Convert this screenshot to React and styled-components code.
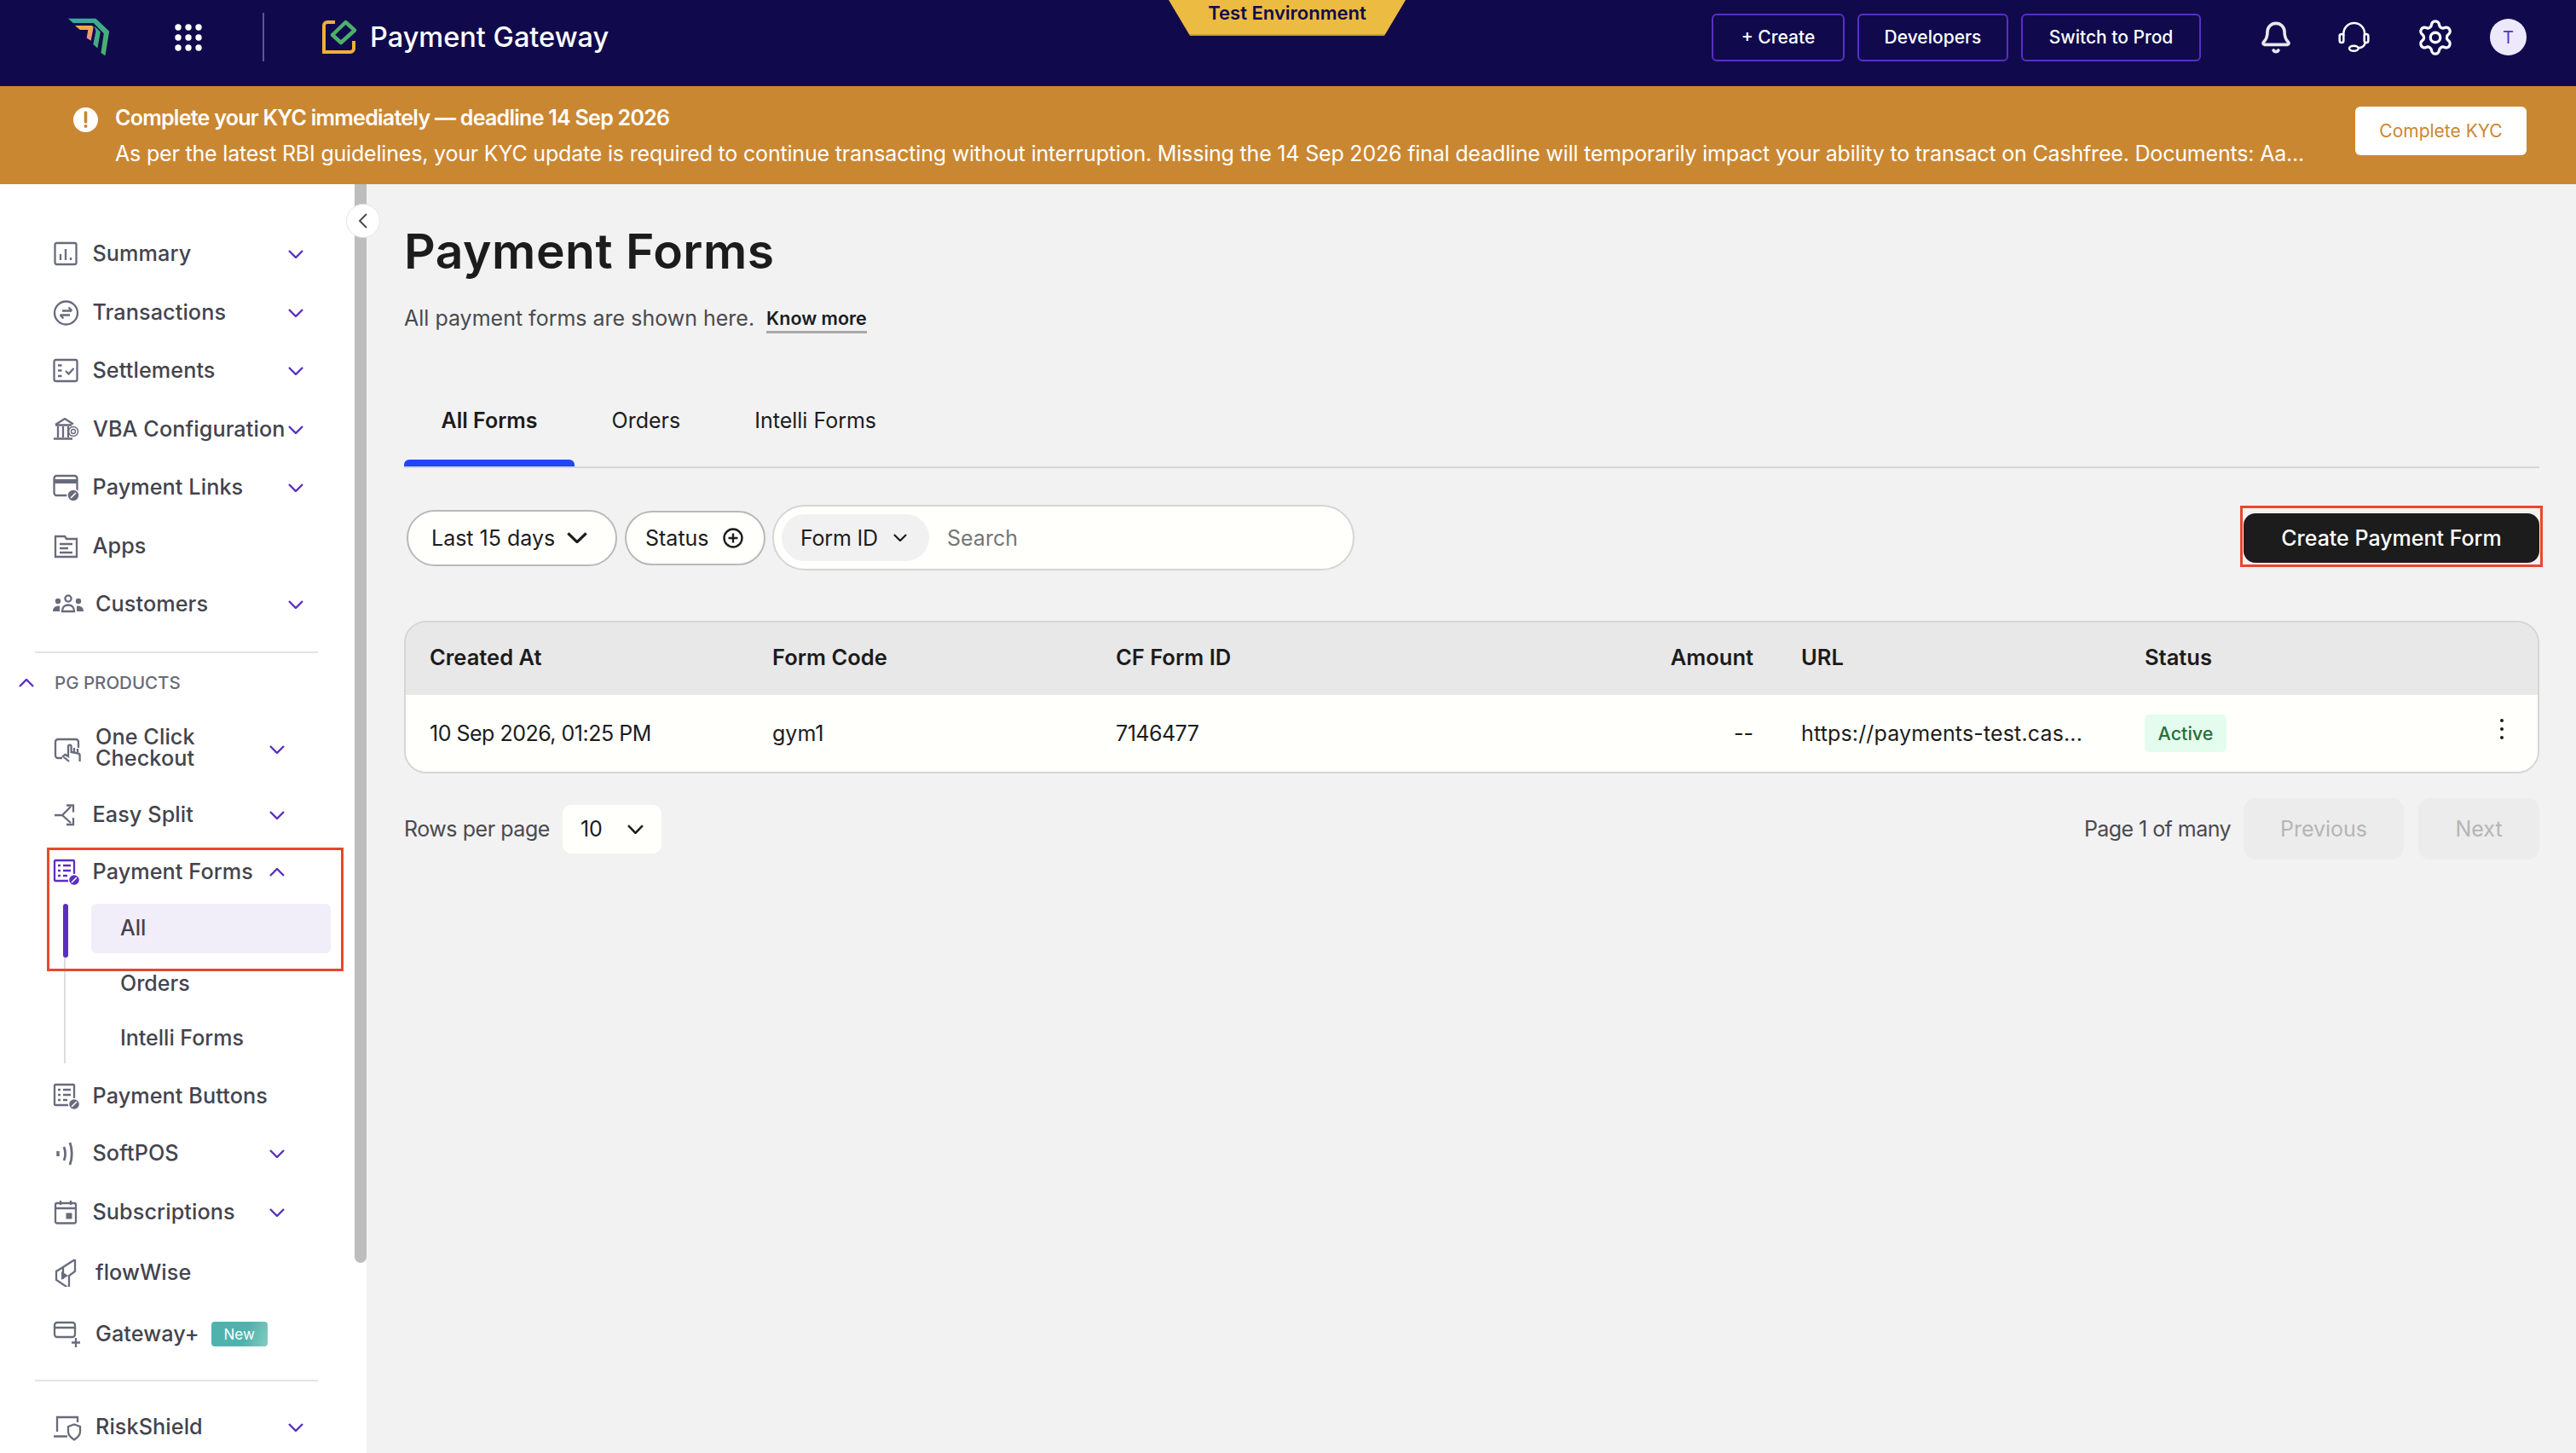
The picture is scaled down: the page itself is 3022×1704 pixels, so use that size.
import styled, { createGlobalStyle } from 'styled-components';
import { Bell, Settings } from 'lucide-react';

const GlobalStyle = createGlobalStyle`
  html, body {
    margin: 0;
    padding: 0;
    background: #f2f2f3;
    font-family: Inter, "Liberation Sans", sans-serif;
  }
  *, *::before, *::after {
    box-sizing: border-box;
  }
`;

const NAVY = '#100a4d';
const PURPLE = '#5a2fc2';
const RED = '#e9472c';
const INK = '#1c1c1c';
const GRID = '402px 403px 403px 401px 403px 1fr';

function Logo() {
  return (
    <LogoSvg width="54" height="47" viewBox="20 15 160 140">
      <defs>
        <linearGradient id="logoTeal" x1="0" y1="0" x2="1" y2="1">
          <stop offset="0" stopColor="#35a9a6" />
          <stop offset="1" stopColor="#4cb164" />
        </linearGradient>
        <linearGradient id="logoOrange" x1="0" y1="0" x2="0" y2="1">
          <stop offset="0" stopColor="#f0ae3c" />
          <stop offset="1" stopColor="#f08a9a" />
        </linearGradient>
      </defs>
      <path d="M28 20H125L172 65L158 150L143 140L153 72L117 36H46Z" fill="url(#logoTeal)" />
      <path d="M120 46L141 67L131 124L116 110L125 64Z" fill="url(#logoTeal)" />
      <path d="M52 45H112L117 50L108 98L93 88L98 60H70Z" fill="url(#logoOrange)" />
    </LogoSvg>
  );
}

function AppsGrid() {
  return (
    <svg width="32" height="32" viewBox="0 0 32 32" fill="#fff">
      {[4, 16, 28].map((y) =>
        [4, 16, 28].map((x) => <circle key={`${x}-${y}`} cx={x} cy={y} r="3.7" />)
      )}
    </svg>
  );
}

function ProductIcon() {
  return (
    <svg width="43" height="42" viewBox="0 0 43 42" fill="none">
      <path d="M15 3H6a4 4 0 0 0-4 4v31h31a4 4 0 0 0 4-4V25" stroke="#f0ae3c" strokeWidth="4" />
      <path d="M27.500 3L38 12.500L22 27L12 18Z" stroke="#4cb06c" strokeWidth="4.400" strokeLinejoin="round" />
    </svg>
  );
}

function Headset() {
  return (
    <svg width="40" height="39" viewBox="310 25 120 115" fill="none" stroke="#fff" strokeWidth="7.500">
      <path d="M332 78v-8a37 37 0 0 1 74 0v8" />
      <rect x="318" y="72" width="14" height="30" rx="7" />
      <rect x="405" y="72" width="14" height="30" rx="7" />
      <path d="M408 102c-2 12-12 18-24 19" />
      <ellipse cx="368" cy="122" rx="16" ry="9" />
    </svg>
  );
}

function AlertIcon() {
  return (
    <svg width="29" height="29" viewBox="0 0 29 29">
      <circle cx="14.500" cy="14.500" r="14.500" fill="#fff" />
      <path d="M14.500 6v11" stroke="#ca8732" strokeWidth="3.600" strokeLinecap="round" />
      <circle cx="14.500" cy="22" r="2" fill="#ca8732" />
    </svg>
  );
}

function Down({ w = 18, h = 10, up, color }) {
  return (
    <Chevron width={w} height={h} viewBox="0 0 18 10" preserveAspectRatio="none" $up={up} $color={color}>
      <path d="M1 1l8 8 8-8" />
    </Chevron>
  );
}

const icons = {
  summary: (
    <>
      <rect x="2.500" y="3" width="25" height="25" rx="2" />
      <path d="M9 23v-7M15 23V10M21 23v-3" />
    </>
  ),
  transactions: (
    <>
      <circle cx="15.500" cy="16" r="13.500" />
      <path d="M11 13.500h11M18.500 9.500l4 4M20 18.500H8.500M12.500 22.500l-4-4" />
    </>
  ),
  settlements: (
    <>
      <rect x="1.500" y="3" width="27" height="25" rx="2" />
      <path d="M6 9.500h4.500M6 15.500h4.500M6 22h4.500M15 16l3.500 3.500 6-6.500" />
    </>
  ),
  vba: (
    <>
      <path d="M3 10L14 3L24 9.500M3 10.500h19M6 12v13M12 12v13M18 12v13M1 26.500h22" />
      <circle cx="24" cy="18" r="5.500" strokeWidth="1.400" />
      <circle cx="24" cy="18" r="2.500" strokeWidth="1.400" />
    </>
  ),
  links: (
    <>
      <rect x="1.500" y="2" width="27" height="23" rx="3" />
      <rect x="1.500" y="6" width="27" height="5" fill="currentColor" stroke="none" />
      <circle cx="24" cy="25" r="7" fill="currentColor" stroke="#fff" strokeWidth="1.500" />
      <path d="M21 28l6-6" stroke="#fff" strokeWidth="1.600" />
    </>
  ),
  apps: (
    <>
      <path d="M3 28V4h11l2 3h12v21z" />
      <path d="M8 13h15M8 18h10M8 23h15" />
    </>
  ),
  customers: (
    <>
      <circle cx="18" cy="9" r="3.600" />
      <path d="M11 24c0-5 3-7.500 7-7.500s7 2.500 7 7.500z" />
      <circle cx="6" cy="12" r="3.200" fill="currentColor" stroke="none" />
      <circle cx="30" cy="12" r="3.200" fill="currentColor" stroke="none" />
      <path d="M0 24c0-4 2-6.500 8-6.500v6.500zM36 24c0-4-2-6.500-8-6.500v6.500z" fill="currentColor" stroke="none" />
    </>
  ),
  checkout: (
    <>
      <path d="M11 26H6a3 3 0 0 1-3-3V7a3 3 0 0 1 3-3h21a3 3 0 0 1 3 3v7" />
      <path d="M19 30l-7-6 2.500-2 3.500 2V12.500a1.800 1.800 0 0 1 3.600 0V19l8 1.500a2.500 2.500 0 0 1 2 2.500v7M25 14v5M29 15v4" />
    </>
  ),
  split: (
    <>
      <path d="M2 16h9l10-10M11 16l10 9" />
      <path d="M16 4.500h8v8M24 19v8h-8" />
    </>
  ),
  forms: (
    <>
      <rect x="2" y="2" width="23" height="24" rx="1" />
      <path d="M6 8h3M12 8h9M6 14h3M12 14h9M6 20h3M12 20h5" />
      <circle cx="25" cy="25" r="6.500" fill="currentColor" stroke="#fff" strokeWidth="1.400" />
      <path d="M22 28l6-6" stroke="#fff" strokeWidth="1.600" />
    </>
  ),
  softpos: (
    <>
      <path d="M6 13v6" strokeWidth="3.400" />
      <path d="M13 8c2 5 2 11 0 16" strokeWidth="2.800" />
      <path d="M20 3c3 7.500 3 18.500 0 26" strokeWidth="2.800" />
    </>
  ),
  calendar: (
    <>
      <rect x="3" y="5" width="24" height="23.500" rx="2" />
      <path d="M9 2v5M21 2v5M3 11h24" />
      <rect x="15.500" y="16.500" width="7" height="7" fill="currentColor" stroke="none" />
    </>
  ),
  flow: (
    <>
      <path d="M12 9L26 0V14L19 19V34L4 24V14L12 9V23" />
      <path d="M10 14L18 19L10 24Z" fill="currentColor" stroke="none" />
    </>
  ),
  gateway: (
    <>
      <rect x="2" y="2" width="24" height="17" rx="3" />
      <path d="M2 8h24M27 20v11M22 25.500h10" />
    </>
  ),
  risk: (
    <>
      <path d="M5 21V4h24v6M1 26.500h16" />
      <path d="M18 15l7-2.500 7 2.500v6c0 4.500-3 7-7 9.500-4-2.500-7-5-7-9.500z" />
    </>
  ),
};

function NavIcon({ name, active }) {
  return (
    <NavSvg viewBox="0 0 36 32" $active={active}>
      {icons[name]}
    </NavSvg>
  );
}

function NavRow({ icon, label, h, inset, nudge, chevron, up, active, children, multi }) {
  return (
    <Row $h={h} $inset={inset}>
      <IconSlot $w={nudge}>
        <NavIcon name={icon} active={active} />
      </IconSlot>
      <Label $multi={multi}>{label}</Label>
      {children}
      {chevron && (
        <ChevronSlot>
          <Down up={up} />
        </ChevronSlot>
      )}
    </Row>
  );
}

export default function App() {
  return (
    <>
      <GlobalStyle />
      <Page>
        <TopBar>
          <Logo />
          <GridSlot>
            <AppsGrid />
          </GridSlot>
          <BarDivider />
          <ProductIcon />
          <ProductName>Payment Gateway</ProductName>
          <EnvRibbon>Test Environment</EnvRibbon>
          <TopActions>
            <GhostButton $w={156}>+ Create</GhostButton>
            <GhostButton $w={177}>Developers</GhostButton>
            <GhostButton $w={211}>Switch to Prod</GhostButton>
            <TopIcons>
              <Bell size={40} color="#e8e8ee" strokeWidth={2.2} />
              <Headset />
              <Settings size={46} color="#fff" strokeWidth={1.7} />
              <Avatar>T</Avatar>
            </TopIcons>
          </TopActions>
        </TopBar>

        <Banner>
          <BannerIcon>
            <AlertIcon />
          </BannerIcon>
          <BannerText>
            <BannerTitle>Complete your KYC immediately — deadline 14 Sep 2026</BannerTitle>
            <BannerBody>
              As per the latest RBI guidelines, your KYC update is required to continue transacting without
              interruption. Missing the 14 Sep 2026 final deadline will temporarily impact your ability to transact on
              Cashfree. Documents: Aa...
            </BannerBody>
          </BannerText>
          <KycButton>Complete KYC</KycButton>
        </Banner>

        <Body>
          <SideColumn>
            <Sidebar>
              <NavGroup>
                <NavRow icon="summary" label="Summary" chevron />
                <NavRow icon="transactions" label="Transactions" chevron />
                <NavRow icon="settlements" label="Settlements" chevron />
                <NavRow icon="vba" label="VBA Configuration" nudge={47} chevron />
                <NavRow icon="links" label="Payment Links" chevron />
                <NavRow icon="apps" label="Apps" />
                <NavRow icon="customers" label="Customers" nudge={50} chevron />
              </NavGroup>
              <SideDivider $top={20} />
              <SectionHead>
                <Down up />
                <SectionTitle>PG PRODUCTS</SectionTitle>
              </SectionHead>
              <NavGroup $top={20}>
                <NavRow icon="checkout" label={'One Click\nCheckout'} multi h={80} nudge={50} inset chevron />
                <NavRow icon="split" label="Easy Split" h={74} inset chevron />
                <Highlighted>
                  <NavRow icon="forms" label="Payment Forms" h={60} inset chevron up active />
                  <SubList>
                    <SubItem $active $h={58}>
                      All
                    </SubItem>
                    <SubItem $h={70}>Orders</SubItem>
                    <SubItem $h={59}>Intelli Forms</SubItem>
                  </SubList>
                </Highlighted>
                <NavRow icon="forms" label="Payment Buttons" h={78} inset />
                <NavRow icon="softpos" label="SoftPOS" h={56} inset chevron />
                <NavRow icon="calendar" label="Subscriptions" h={82} inset chevron />
                <NavRow icon="flow" label="flowWise" h={60} nudge={50} inset />
                <NavRow icon="gateway" label="Gateway+" h={84} nudge={50} inset>
                  <NewBadge>New</NewBadge>
                </NavRow>
              </NavGroup>
              <SideDivider $top={11} />
              <NavRow icon="risk" label="RiskShield" h={108} nudge={50} chevron />
            </Sidebar>
            <Thumb />
            <CollapseButton>
              <svg width="12" height="20" viewBox="0 0 12 20" fill="none" stroke="#4b4b57" strokeWidth="2">
                <path d="M10 2L2 10l8 8" />
              </svg>
            </CollapseButton>
          </SideColumn>

          <Main>
            <Title>Payment Forms</Title>
            <Subtitle>
              All payment forms are shown here.
              <KnowMore>Know more</KnowMore>
            </Subtitle>

            <Tabs>
              <Tab $active>All Forms</Tab>
              <Tab>Orders</Tab>
              <Tab>Intelli Forms</Tab>
            </Tabs>

            <Toolbar>
              <DatePill>
                Last 15 days
                <Down w={24} h={13} color={INK} />
              </DatePill>
              <StatusPill>
                Status
                <svg width="24" height="24" viewBox="0 0 24 24" fill="none" stroke={INK} strokeWidth="2.400">
                  <circle cx="12" cy="12" r="10.500" />
                  <path d="M12 6.500v11M6.500 12h11" />
                </svg>
              </StatusPill>
              <SearchBox>
                <SearchChip>
                  Form ID
                  <Down w={16} h={9} color={INK} />
                </SearchChip>
                <SearchHint>Search</SearchHint>
              </SearchBox>
              <CreateButton>Create Payment Form</CreateButton>
            </Toolbar>

            <Table>
              <HeadRow>
                <HeadCell>Created At</HeadCell>
                <HeadCell>Form Code</HeadCell>
                <HeadCell>CF Form ID</HeadCell>
                <HeadCell $right>Amount</HeadCell>
                <HeadCell>URL</HeadCell>
                <HeadCell>Status</HeadCell>
              </HeadRow>
              <BodyRow>
                <Cell $spacing="-0.5px">10 Sep 2026, 01:25 PM</Cell>
                <Cell>gym1</Cell>
                <Cell $spacing="-0.5px">7146477</Cell>
                <Cell $right>--</Cell>
                <Cell $spacing="0.15px">https://payments-test.cas...</Cell>
                <StatusCell>
                  <ActiveBadge>Active</ActiveBadge>
                  <Kebab width="6" height="26" viewBox="0 0 6 26" fill={INK}>
                    <circle cx="3" cy="3" r="2" />
                    <circle cx="3" cy="13" r="2" />
                    <circle cx="3" cy="23" r="2" />
                  </Kebab>
                </StatusCell>
              </BodyRow>
            </Table>

            <Pagination>
              <RowsLabel>Rows per page</RowsLabel>
              <RowsSelect>
                10
                <Down w={19} h={11} color={INK} />
              </RowsSelect>
              <PageInfo>Page 1 of many</PageInfo>
              <PageButton $w={188}>Previous</PageButton>
              <PageButton $w={142}>Next</PageButton>
            </Pagination>
          </Main>
        </Body>
      </Page>
    </>
  );
}

const Page = styled.div`
  width: 100vw;
  height: 100vh;
  display: flex;
  flex-direction: column;
  overflow: hidden;
  background: #f2f2f3;
`;

const TopBar = styled.header`
  position: relative;
  height: 101px;
  flex: none;
  display: flex;
  align-items: center;
  padding: 0 58px 14px 77px;
  background: ${NAVY};
`;

const LogoSvg = styled.svg`
  flex: none;
`;

const GridSlot = styled.div`
  display: flex;
  margin-left: 74px;
`;

const BarDivider = styled.div`
  width: 2px;
  height: 57px;
  margin: 0 68px 0 71px;
  background: #5c5794;
`;

const ProductName = styled.div`
  margin-left: 13px;
  font-size: 32.5px;
  font-weight: 500;
  color: #fff;
`;

const EnvRibbon = styled.div`
  position: absolute;
  top: 0;
  left: 1371px;
  width: 278px;
  height: 42px;
  padding-bottom: 13px;
  display: flex;
  align-items: center;
  justify-content: center;
  font-size: 22px;
  font-weight: 600;
  color: ${NAVY};
  background: linear-gradient(#ecbb41 95%, #c99a33 95%);
  clip-path: polygon(0 0, 100% 0, 91% 100%, 9% 100%);
`;

const TopActions = styled.div`
  margin-left: auto;
  display: flex;
  align-items: center;
  gap: 15px;
`;

const GhostButton = styled.div`
  width: ${(p) => p.$w}px;
  height: 56px;
  display: flex;
  align-items: center;
  justify-content: center;
  border: 2px solid ${PURPLE};
  border-radius: 6px;
  font-size: 21px;
  font-weight: 500;
  color: #fff;
`;

const TopIcons = styled.div`
  margin-left: 53px;
  display: flex;
  align-items: center;
  gap: 52px;
`;

const Avatar = styled.div`
  width: 43px;
  height: 43px;
  margin-left: -11px;
  display: flex;
  align-items: center;
  justify-content: center;
  border-radius: 50%;
  font-size: 20px;
  color: ${PURPLE};
  background: #eee8fc;
`;

const Banner = styled.section`
  height: 115px;
  flex: none;
  display: flex;
  align-items: center;
  padding: 0 58px 0 86px;
  color: #fff;
  background: #ca8732;
`;

const BannerIcon = styled.div`
  align-self: flex-start;
  margin-top: 25px;
  margin-right: 20px;
  display: flex;
`;

const BannerText = styled.div`
  flex: 1;
  min-width: 0;
`;

const BannerTitle = styled.div`
  font-size: 25px;
  line-height: 36px;
  font-weight: 600;
  letter-spacing: -0.73px;
`;

const BannerBody = styled.div`
  margin-top: 6px;
  font-size: 25px;
  line-height: 36px;
  letter-spacing: -0.19px;
  white-space: nowrap;
`;

const KycButton = styled.div`
  width: 201px;
  height: 57px;
  flex: none;
  margin: 0 0 10px 60px;
  display: flex;
  align-items: center;
  justify-content: center;
  border-radius: 6px;
  font-size: 21px;
  font-weight: 400;
  color: #ca8732;
  background: #fff;
`;

const Body = styled.div`
  flex: 1;
  min-height: 0;
  display: flex;
`;

const SideColumn = styled.div`
  position: relative;
  width: 430px;
  flex: none;
  background: #fff;
`;

const Sidebar = styled.nav`
  height: 100%;
  padding-top: 48px;
  overflow: hidden;
`;

const Thumb = styled.div`
  position: absolute;
  top: 0;
  left: 416px;
  width: 14px;
  height: 1265px;
  border-radius: 0 0 7px 7px;
  background: #bdbdbd;
`;

const CollapseButton = styled.div`
  position: absolute;
  z-index: 2;
  top: 23px;
  left: 406px;
  width: 40px;
  height: 40px;
  display: flex;
  align-items: center;
  justify-content: center;
  border: 1px solid #e4e4e6;
  border-radius: 50%;
  background: #fff;
`;

const NavGroup = styled.div`
  margin-top: ${(p) => p.$top || 0}px;
`;

const Row = styled.div`
  position: relative;
  height: ${(p) => p.$h || 68.5}px;
  display: flex;
  align-items: center;
  padding: 0 ${(p) => (p.$inset ? 96 : 74)}px 0 62px;
`;

const IconSlot = styled.div`
  width: ${(p) => p.$w || 46.5}px;
  flex: none;
  display: flex;
`;

const NavSvg = styled.svg`
  width: 36px;
  height: 32px;
  fill: none;
  stroke: currentColor;
  stroke-width: 2.3;
  color: ${(p) => (p.$active ? PURPLE : '#686b7b')};
`;

const Label = styled.span`
  margin-top: ${(p) => (p.$multi ? -3 : -1)}px;
  font-size: 25.2px;
  line-height: 25px;
  font-weight: 500;
  letter-spacing: 0.1px;
  color: #44444d;
  white-space: pre-line;
`;

const ChevronSlot = styled.span`
  margin-left: auto;
  display: flex;
`;

const Chevron = styled.svg`
  flex: none;
  fill: none;
  stroke: ${(p) => p.$color || PURPLE};
  stroke-width: 2.4;
  transform: ${(p) => (p.$up ? 'rotate(180deg)' : 'none')};
`;

const SideDivider = styled.div`
  height: 2px;
  width: 332px;
  margin: ${(p) => p.$top}px 0 0 41px;
  background: #e4e4e6;
`;

const SectionHead = styled.div`
  height: 36px;
  margin-top: 17px;
  display: flex;
  align-items: center;
  gap: 24px;
  padding-left: 22px;
`;

const SectionTitle = styled.span`
  font-size: 20.5px;
  font-weight: 500;
  color: #686b7b;
`;

const Highlighted = styled.div`
  position: relative;

  &::after {
    content: '';
    position: absolute;
    top: 1px;
    left: 55px;
    width: 348px;
    height: 145px;
    border: 3px solid ${RED};
    pointer-events: none;
  }
`;

const SubList = styled.div`
  margin: 7px 0 0 75px;
  padding-left: 30px;
  border-left: 2px solid #dddddf;
`;

const SubItem = styled.div`
  position: relative;
  width: 281px;
  height: ${(p) => p.$h}px;
  display: flex;
  align-items: center;
  padding: 0 0 ${(p) => (p.$active ? 2 : 0)}px 34px;
  border-radius: 6px;
  font-size: 25px;
  font-weight: 500;
  color: #44444d;
  background: ${(p) => (p.$active ? '#f1eef9' : 'transparent')};

  ${(p) =>
    p.$active &&
    `&::before {
      content: '';
      position: absolute;
      top: 0;
      left: -33px;
      width: 6px;
      height: 63px;
      border-radius: 3px;
      background: ${PURPLE};
    }`}
`;

const NewBadge = styled.span`
  width: 66px;
  height: 29px;
  margin-left: 14px;
  display: flex;
  align-items: center;
  justify-content: center;
  border-radius: 4px;
  font-size: 17px;
  color: #fff;
  background: linear-gradient(110deg, #4fb3ad 60%, #84cbc0);
`;

const Main = styled.main`
  flex: 1;
  min-width: 0;
  padding: 44px 43px 0 44px;
`;

const Title = styled.h1`
  margin: 0;
  font-size: 57px;
  line-height: 70px;
  font-weight: 600;
  letter-spacing: 0.5px;
  color: ${INK};
`;

const Subtitle = styled.div`
  margin-top: 25px;
  display: flex;
  align-items: center;
  height: 36px;
  font-size: 25px;
  color: #4a4a4f;
`;

const KnowMore = styled.span`
  margin: 2px 0 0 14px;
  border-bottom: 3px solid #a8a8a8;
  font-size: 21.5px;
  line-height: 30px;
  font-weight: 600;
  color: ${INK};
`;

const Tabs = styled.div`
  margin-top: 48px;
  display: flex;
  border-bottom: 2px solid #d5d5d7;
`;

const Tab = styled.div`
  position: relative;
  height: 108px;
  padding: 0 43.5px;
  display: flex;
  align-items: center;
  font-size: 25px;
  font-weight: ${(p) => (p.$active ? 600 : 400)};
  color: ${INK};

  ${(p) =>
    p.$active &&
    `&::after {
      content: '';
      position: absolute;
      left: 0;
      right: 0;
      bottom: 0;
      height: 8px;
      border-radius: 6px 6px 0 0;
      background: #2246f6;
    }`}
`;

const Toolbar = styled.div`
  margin-top: 43px;
  height: 77px;
  display: flex;
  align-items: center;
  padding-left: 3px;
`;

const Pill = styled.div`
  display: flex;
  align-items: center;
  justify-content: space-between;
  border: 2px solid #b9b9bb;
  border-radius: 33px;
  font-size: 25px;
  color: ${INK};
  background: #fffffb;
`;

const DatePill = styled(Pill)`
  width: 247px;
  height: 66px;
  padding: 0 33px 0 27px;
`;

const StatusPill = styled(Pill)`
  width: 165px;
  height: 64px;
  margin-left: 9px;
  padding: 0 24px 0 22px;
`;

const SearchBox = styled.div`
  width: 683px;
  height: 77px;
  margin-left: 8px;
  display: flex;
  align-items: center;
  padding-left: 9px;
  border: 2px solid #d5d5d7;
  border-radius: 38px;
  background: #fffffb;
`;

const SearchChip = styled.div`
  width: 173px;
  height: 55px;
  display: flex;
  align-items: center;
  justify-content: space-between;
  padding: 0 26px 0 22px;
  border-radius: 27px;
  font-size: 25px;
  letter-spacing: -0.2px;
  color: ${INK};
  background: #f1f1f2;
`;

const SearchHint = styled.span`
  margin-left: 21px;
  font-size: 25px;
  color: #767678;
`;

const CreateButton = styled.div`
  position: relative;
  width: 347px;
  height: 58px;
  margin-left: auto;
  display: flex;
  align-items: center;
  justify-content: center;
  border-radius: 14px;
  font-size: 25px;
  font-weight: 500;
  color: #fff;
  background: ${INK};

  &::after {
    content: '';
    position: absolute;
    inset: -9px -4px -5px;
    border: 3px solid ${RED};
  }
`;

const Table = styled.div`
  margin-top: 59px;
  border: 2px solid #d5d5d7;
  border-radius: 26px;
  overflow: hidden;
`;

const HeadRow = styled.div`
  height: 85px;
  display: grid;
  grid-template-columns: ${GRID};
  align-items: center;
  padding-bottom: 4px;
  background: #e8e8e9;
`;

const HeadCell = styled.div`
  padding: 0 28px;
  font-size: 25.5px;
  font-weight: 600;
  color: ${INK};
  text-align: ${(p) => (p.$right ? 'right' : 'left')};
`;

const BodyRow = styled.div`
  height: 90px;
  display: grid;
  grid-template-columns: ${GRID};
  align-items: center;
  background: #fffffb;
`;

const Cell = styled.div`
  padding: 0 28px;
  font-size: 25px;
  letter-spacing: ${(p) => p.$spacing || '0'};
  color: ${INK};
  white-space: nowrap;
  text-align: ${(p) => (p.$right ? 'right' : 'left')};
`;

const StatusCell = styled.div`
  display: flex;
  align-items: center;
  justify-content: space-between;
  padding: 0 39px 0 28px;
`;

const ActiveBadge = styled.span`
  width: 96px;
  height: 44px;
  display: flex;
  align-items: center;
  justify-content: center;
  border-radius: 6px;
  font-size: 21.5px;
  font-weight: 500;
  color: #2a6e3a;
  background: #e4fcee;
`;

const Kebab = styled.svg`
  margin-bottom: 10px;
`;

const Pagination = styled.div`
  margin-top: 29px;
  height: 72px;
  display: flex;
  align-items: center;
`;

const RowsLabel = styled.span`
  font-size: 25px;
  letter-spacing: -0.45px;
  color: #4a4a4f;
`;

const RowsSelect = styled.div`
  width: 116px;
  height: 57px;
  margin-left: 15px;
  display: flex;
  align-items: center;
  justify-content: space-between;
  padding: 0 21px;
  border-radius: 10px;
  font-size: 25px;
  color: ${INK};
  background: #fffffb;
`;

const PageInfo = styled.span`
  margin: 0 15px 0 auto;
  font-size: 25px;
  letter-spacing: -0.55px;
  color: #4a4a4f;
`;

const PageButton = styled.div`
  width: ${(p) => p.$w}px;
  height: 72px;
  margin-left: ${(p) => (p.$w === 142 ? 17 : 0)}px;
  display: flex;
  align-items: center;
  justify-content: center;
  border-radius: 14px;
  font-size: 25px;
  color: #b5b5b5;
  background: #ececec;
`;
